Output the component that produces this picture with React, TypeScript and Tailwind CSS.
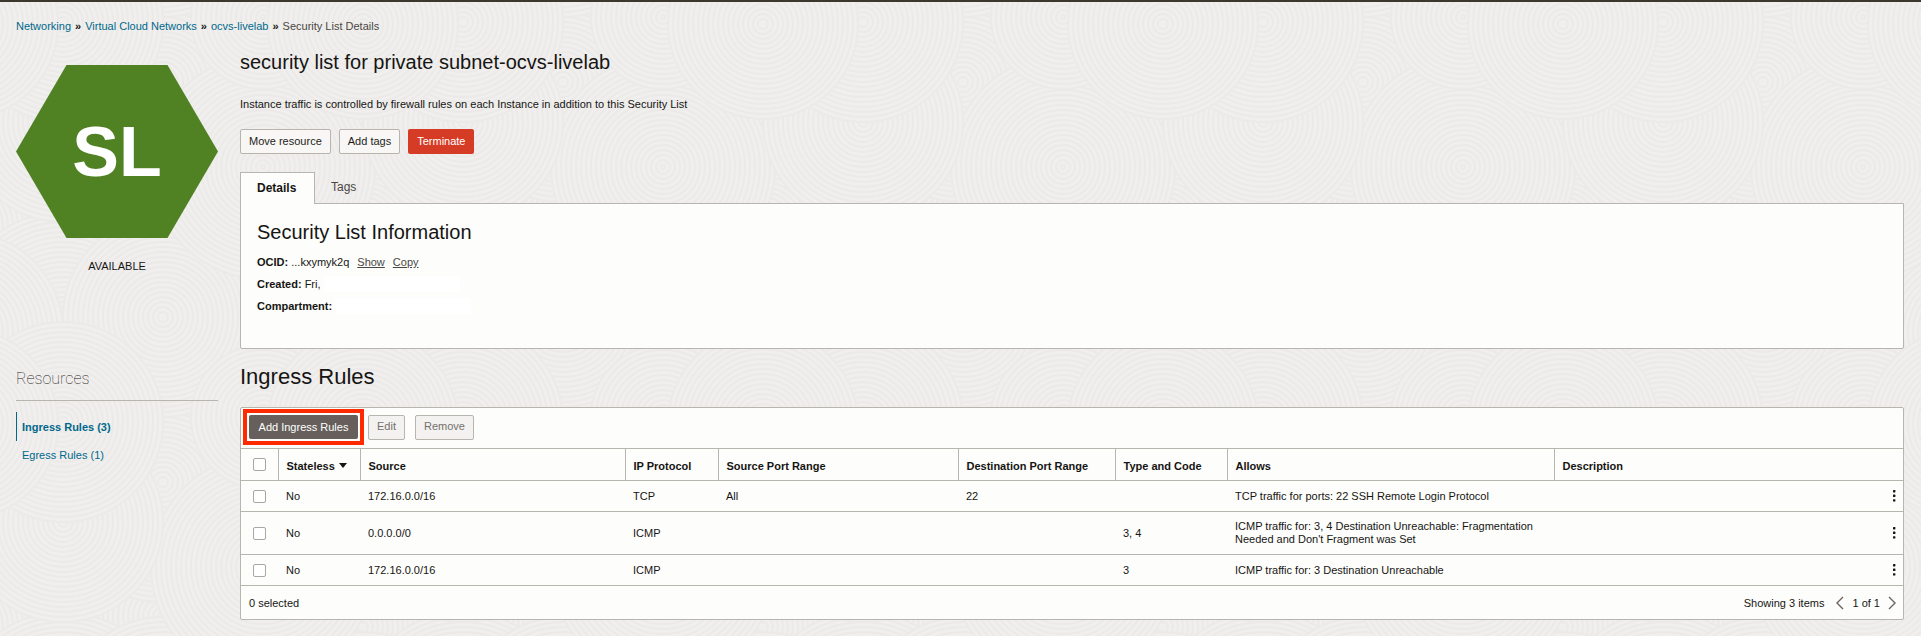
import type { ReactNode } from "react";

const TILE = 400;
const DISCS = [
  { x: 363, y: 225, r: 125 },
  { x: 163, y: 215, r: 120 },
  { x: 163, y: 80, r: 120 },
  { x: 63, y: 320, r: 110 },
  { x: 363, y: 330, r: 100 },
  { x: 163, y: 315, r: 100 },
  { x: 263, y: 165, r: 112 },
  { x: 63, y: 120, r: 100 },
  { x: 263, y: 15, r: 72 },
  { x: 63, y: 20, r: 100 },
  { x: 363, y: 22, r: 95 },
];
const SHIFTS = [-TILE, 0, TILE];

function Backdrop() {
  return (
    <svg aria-hidden="true" className="pointer-events-none absolute inset-0 -z-10 h-full w-full">
      <defs>
        <pattern id="ripples" width={TILE} height={TILE} patternUnits="userSpaceOnUse">
          <rect width={TILE} height={TILE} fill="#f0efed" />
          {DISCS.map((d) =>
            SHIFTS.map((dx) =>
              SHIFTS.map((dy) => (
                <g key={`${d.x}-${d.y}-${dx}-${dy}`} fill="none" stroke="#ebeae8" strokeWidth="1.8">
                  <circle cx={d.x + dx} cy={d.y + dy} r={d.r} fill="#f0efed" />
                  {Array.from({ length: Math.floor(d.r / 5) }, (_, i) => (
                    <circle key={i} cx={d.x + dx} cy={d.y + dy} r={d.r - 5 * (i + 1)} />
                  ))}
                </g>
              )),
            ),
          )}
        </pattern>
      </defs>
      <rect width="100%" height="100%" fill="url(#ripples)" />
    </svg>
  );
}

function Separator() {
  return <span aria-hidden="true" className="text-[11px] font-bold leading-4">»</span>;
}

function Button({ children, disabled = false }: { children: ReactNode; disabled?: boolean }) {
  return (
    <button
      type="button"
      disabled={disabled}
      className="h-[25px] rounded-xs border border-[#b8b4ae] bg-[#f8f7f5] px-2 pb-[2px] text-[#1e1c1a] disabled:bg-[#f3f2f0] disabled:text-[#73706c]"
    >
      {children}
    </button>
  );
}

function Check({ label }: { label: string }) {
  return (
    <input
      type="checkbox"
      aria-label={label}
      className="block size-[13px] appearance-none rounded-xs border border-[#aaa6a2] bg-white checked:bg-[#00688c]"
    />
  );
}

function Chevron({ d, label }: { d: string; label: string }) {
  return (
    <button type="button" aria-label={label} className="flex">
      <svg width="8" height="14" viewBox="0 0 8 14" fill="none" stroke="#6a6561" strokeWidth="1.4">
        <path d={d} />
      </svg>
    </button>
  );
}

const COLUMNS = [
  "Source",
  "IP Protocol",
  "Source Port Range",
  "Destination Port Range",
  "Type and Code",
  "Allows",
];

const RULES = [
  ["172.16.0.0/16", "TCP", "All", "22", "", "TCP traffic for ports: 22 SSH Remote Login Protocol"],
  [
    "0.0.0.0/0",
    "ICMP",
    "",
    "",
    "3, 4",
    "ICMP traffic for: 3, 4 Destination Unreachable: Fragmentation Needed and Don't Fragment was Set",
  ],
  ["172.16.0.0/16", "ICMP", "", "", "3", "ICMP traffic for: 3 Destination Unreachable"],
];

function RulesTable() {
  return (
    <table className="w-full table-fixed border-collapse text-left leading-[13px]">
      <colgroup>
        <col className="w-[37px]" />
        <col className="w-[82px]" />
        <col className="w-[265px]" />
        <col className="w-[93px]" />
        <col className="w-[240px]" />
        <col className="w-[157px]" />
        <col className="w-[112px]" />
        <col className="w-[327px]" />
        <col />
        <col className="w-[16px]" />
      </colgroup>
      <thead>
        <tr className="h-8 border-y border-[#b8b4ae]">
          <th className="pl-3">
            <Check label="Select all rules" />
          </th>
          <th className="border-l border-[#b8b4ae] px-2 pt-1">
            <button type="button" className="flex gap-1 font-bold">
              Stateless
              <svg width="8" height="5" viewBox="0 0 8 5" className="mt-[3px]" fill="#161513">
                <path d="M0 0h8L4 5z" />
              </svg>
            </button>
          </th>
          {COLUMNS.map((c) => (
            <th key={c} className="border-l border-[#b8b4ae] px-2 pt-1">
              {c}
            </th>
          ))}
          <th colSpan={2} className="border-l border-[#b8b4ae] px-2 pt-1">
            Description
          </th>
        </tr>
      </thead>
      <tbody>
        {RULES.map((cells, row) => (
          <tr key={row} className="h-[31px] border-b border-[#b8b4ae]">
            <td className="pl-3">
              <Check label={`Select rule ${row + 1}`} />
            </td>
            <td className="px-2">No</td>
            {cells.map((cell, i) => (
              <td key={i} className="px-2 py-2">
                {cell}
              </td>
            ))}
            <td />
            <td>
              <button type="button" aria-label={`Actions for rule ${row + 1}`} className="flex pl-[6px]">
                <svg width="3" height="12" viewBox="0 0 3 12" fill="#161513">
                  <rect y="0" width="2.4" height="2.4" rx=".6" />
                  <rect y="4.6" width="2.4" height="2.4" rx=".6" />
                  <rect y="9.2" width="2.4" height="2.4" rx=".6" />
                </svg>
              </button>
            </td>
          </tr>
        ))}
      </tbody>
    </table>
  );
}

export default function App() {
  return (
    <div className="relative isolate min-h-screen border-t-2 border-[#3c3830] pr-[17px] pb-4 pl-4 font-['Liberation_Sans',Arial,sans-serif] text-[11px] leading-4 text-[#161513]">
      <Backdrop />
      <nav aria-label="Breadcrumb" className="flex gap-1 pt-4">
        <a href="#networking" className="text-[#00688c]">Networking</a>
        <Separator />
        <a href="#vcn" className="text-[#00688c]">Virtual Cloud Networks</a>
        <Separator />
        <a href="#ocvs" className="text-[#00688c]">ocvs-livelab</a>
        <Separator />
        <span className="text-[#4a4744]">Security List Details</span>
      </nav>

      <div className="grid grid-cols-[202px_minmax(0,1fr)] gap-x-[22px] pt-4">
        <aside className="pt-[15px] text-center">
          <div className="flex h-[173px] items-center justify-center bg-[#508223] text-[70px] font-bold text-white [clip-path:polygon(25%_0,75%_0,100%_50%,75%_100%,25%_100%,0_50%)]">
            SL
          </div>
          <p className="mt-5">AVAILABLE</p>
        </aside>

        <main>
          <h1 className="text-[20px] leading-6">security list for private subnet-ocvs-livelab</h1>
          <p className="mt-[22px]">
            Instance traffic is controlled by firewall rules on each Instance in addition to this Security List
          </p>
          <div className="mt-[17px] flex gap-2">
            <Button>Move resource</Button>
            <Button>Add tags</Button>
            <button type="button" className="h-[25px] rounded-xs bg-[#d63b25] px-[9px] pb-[2px] text-white">
              Terminate
            </button>
          </div>

          <div role="tablist" className="mt-[18px] flex text-[12px]">
            <button
              type="button"
              role="tab"
              aria-selected="true"
              className="relative z-10 -mb-px h-8 min-w-[75px] border border-b-0 border-[#b8b4ae] bg-[#fdfdfb] px-4 pb-[2px] text-left font-bold"
            >
              Details
            </button>
            <button type="button" role="tab" aria-selected="false" className="px-4 pb-[2px] text-[#4a4744]">
              Tags
            </button>
          </div>
          <section className="rounded-b-xs border border-[#b8b4ae] bg-[#fdfdfb] px-4 pt-4 pb-[34px]">
            <h2 className="text-[20px] leading-6">Security List Information</h2>
            <div className="mt-[10px] flex gap-2">
              <span>
                <b>OCID:</b> ...kxymyk2q
              </span>
              <a href="#show" className="text-[#4a4744] underline">Show</a>
              <a href="#copy" className="text-[#4a4744] underline">Copy</a>
            </div>
            <div className="mt-[6px] flex gap-[3px]">
              <b>Created:</b> Fri,
              <span className="w-[136px] bg-white" />
            </div>
            <div className="mt-[6px] flex gap-[3px]">
              <b>Compartment:</b>
              <span className="w-[136px] bg-white" />
            </div>
          </section>
        </main>

        <aside className="pt-5">
          <h2 className="border-b border-[#b8b4ae] pb-[11px] font-['Roboto','Liberation_Sans',sans-serif] text-[16px] leading-5 font-thin text-[#161513]">
            Resources
          </h2>
          <ul className="mt-[11px]">
            <li className="flex h-[29px] items-center border-l border-[#00688c] pl-[5px]">
              <a href="#ingress" className="font-bold text-[#00688c]">Ingress Rules (3)</a>
            </li>
            <li className="flex h-[28px] items-center pl-[6px]">
              <a href="#egress" className="text-[#00688c]">Egress Rules (1)</a>
            </li>
          </ul>
        </aside>

        <section className="pt-[14px]">
          <h2 className="text-[22px] leading-7">Ingress Rules</h2>
          <div className="mt-4 rounded-xs border border-[#b8b4ae] bg-[#fdfdfb]">
            <div className="flex items-center px-[2px] pt-px pb-[3px]">
              <div className="border-4 border-[#ff2a00] p-[2px]">
                <button type="button" className="block h-6 min-w-[109px] rounded-xs bg-[#665f5b] px-[9px] text-white">
                  Add Ingress Rules
                </button>
              </div>
              <div className="flex gap-[10px] pl-1">
                <Button disabled>Edit</Button>
                <Button disabled>Remove</Button>
              </div>
            </div>
            <RulesTable />
            <div className="flex h-[33px] items-center justify-between pr-[7px] pl-2">
              <span>0 selected</span>
              <div className="flex items-center gap-2">
                <span className="pr-1">Showing 3 items</span>
                <Chevron d="M7 1 1 7l6 6" label="Previous page" />
                <span>1 of 1</span>
                <Chevron d="m1 1 6 6-6 6" label="Next page" />
              </div>
            </div>
          </div>
        </section>
      </div>
    </div>
  );
}
